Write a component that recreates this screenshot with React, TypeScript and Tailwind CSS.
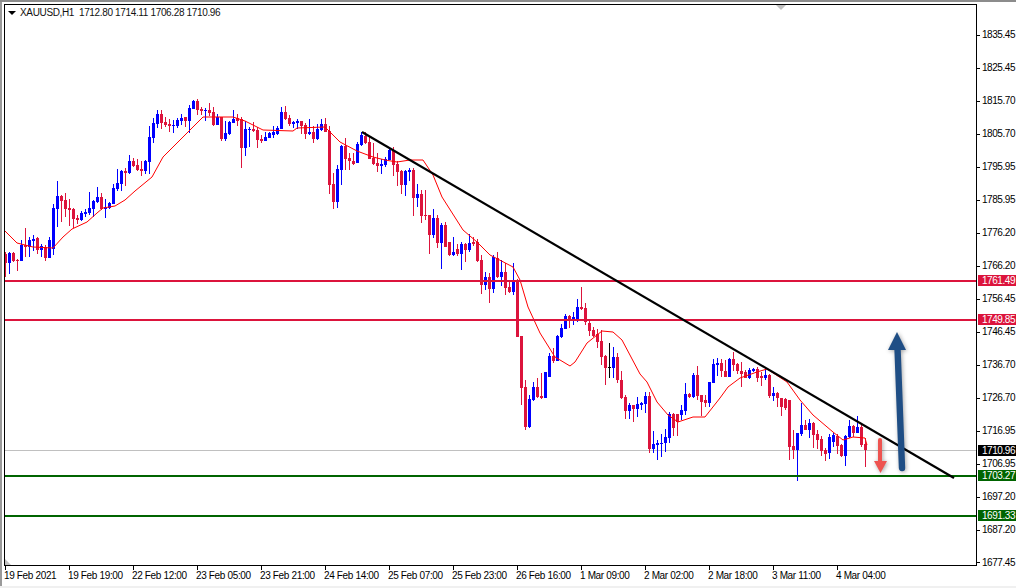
const UP = "#0000FF";
const DOWN = "#DC143C";

type Bar = [string, number, number, number, number]; // colour, high, low, body top, body bottom

// y values read off the chart at 3x, one list per crop (offset brings them to the same scale)
const BARS_A: Bar[] = [
  ["r",755,830,762,790],["b",755,822,760,790],["r",757,785,758,783],["r",778,812,780,783],["b",720,783,735,783],["r",685,770,735,741],
  ["b",712,770,720,741],["b",705,752,716,723],["r",712,762,714,750],["b",732,770,738,750],["r",735,782,740,773],["b",712,773,720,773],
  ["b",612,765,624,748],["b",544,680,588,627],["r",585,665,588,603],["r",580,650,600,627],["r",598,678,624,630],["r",625,685,628,657],
  ["r",645,672,654,660],["b",632,662,640,660],["b",628,650,636,642],["b",576,645,624,640],["b",600,650,603,627],["b",562,610,591,606],
  ["r",580,630,591,627],["b",598,654,621,627],["b",605,628,609,624],["b",552,612,564,612],["b",508,572,549,567],["b",510,572,513,552],
  ["r",505,558,513,519],["b",465,522,483,519],["r",475,500,483,498],["r",478,512,495,510],["r",483,527,507,513],["b",480,522,483,513],
  ["b",378,522,411,486],["b",355,428,369,414],["b",330,385,342,372],["r",330,388,342,369],["r",352,380,366,375],["r",358,396,372,378],
  ["b",360,398,375,378],["b",355,385,361,378],["b",342,375,354,363],["r",350,380,352,364],["b",315,398,324,363],["b",300,328,303,327],
  ["r",297,345,303,330],["r",322,345,327,333],["b",325,362,330,333],["r",308,348,330,340],["r",322,378,336,375],["b",342,375,352,375],
  ["r",350,422,352,417],["b",362,422,399,417],["b",362,404,366,402],["b",330,370,357,369],["r",342,378,354,363],["r",352,504,357,444],
  ["b",362,468,387,444],["b",380,440,386,390],["r",365,396,387,393],["r",380,444,390,420],["r",405,430,417,423],["b",396,424,411,423],
  ["b",396,414,399,414],["b",378,414,396,405],["b",378,404,384,402],["b",321,388,336,387],["r",318,360,336,357],["r",345,378,354,372],
  ["b",362,385,366,372],["b",358,386,363,369],["r",362,402,363,378],["r",370,418,375,402],["b",356,405,396,402],["r",378,428,396,417],
  ["b",372,420,387,417],["b",356,393,372,390],["r",355,396,372,396],["r",378,582,393,555],["r",520,627,552,606],["b",495,624,507,606],
];
const BARS_B: Bar[] = [
  ["b",75,195,78,150],["r",55,150,78,117],["r",100,150,114,123],["r",100,135,123,132],["b",65,130,72,129],["b",37,78,45,75],
  ["r",36,72,48,69],["r",50,118,66,117],["r",68,135,114,132],["r",98,156,129,138],["b",118,162,132,138],["b",110,140,117,135],
  ["b",85,120,90,120],["r",82,168,90,135],["r",122,198,132,156],["r",150,222,153,195],["b",150,228,153,195],["b",145,183,150,156],
  ["r",145,288,150,234],["b",192,260,222,234],["r",210,308,222,288],["r",210,300,285,288],["r",285,402,285,345],["b",267,355,294,345],
  ["r",285,385,294,369],["b",310,447,315,369],["r",305,382,315,381],["r",365,408,366,405],["b",350,408,396,405],["r",372,408,387,402],
  ["b",365,450,372,402],["r",368,425,372,390],["b",342,395,369,390],["r",352,378,366,372],["r",358,425,366,423],["r",405,522,420,495],
  ["b",455,510,471,495],["r",460,548,471,507],["b",405,520,411,507],["r",395,475,414,471],["b",420,498,456,471],["r",428,525,456,504],
  ["r",480,520,501,516],["b",430,525,483,516],["r",478,652,483,650],["r",648,855,648,804],["r",780,930,801,921],["b",825,924,837,921],
  ["b",785,842,801,840],["r",775,835,801,831],["r",758,836,828,834],["b",755,834,756,834],["b",700,772,708,771],["r",685,730,708,723],
  ["b",645,723,648,723],["b",612,654,624,651],["b",582,627,588,627],["r",585,625,588,600],["b",575,615,591,603],["b",537,605,561,597],
  ["r",502,570,561,567],["r",550,615,564,606],["r",598,648,609,633],["r",620,650,630,648],["r",628,684,642,666],["r",630,735,663,711],
  ["r",705,795,708,744],["k",670,775,741,744],["b",680,775,711,744],["r",700,790,711,781],["r",752,838,780,834],["r",825,897,831,873],
  ["b",848,897,855,873],["r",855,906,855,867],["b",830,890,852,867],["b",845,870,849,855],["b",815,880,828,852],["r",815,1000,828,987],
  ["b",933,998,972,987],["b",960,1020,969,975],
];
const BARS_C: Bar[] = [
  ["b",312,380,338,342],["b",298,365,322,340],["b",245,340,252,324],["r",250,318,252,294],["r",255,318,252,276],["b",225,270,240,256],
  ["b",160,255,192,243],["r",190,203,192,201],["b",128,205,135,201],["r",108,210,135,198],["r",195,258,195,216],["r",195,232,210,219],
  ["b",155,230,156,219],["b",88,160,102,159],["b",85,138,99,105],["r",88,140,99,123],["r",90,142,123,141],["b",85,142,87,141],
  ["r",65,122,87,105],["r",100,132,102,123],["r",95,172,123,132],["r",120,145,126,144],["b",115,148,120,144],["b",115,125,117,123],
  ["r",112,155,117,144],["r",125,168,138,144],["b",110,150,135,144],["r",132,205,135,198],["b",170,212,189,198],["r",185,232,189,204],
  ["r",205,258,204,231],["r",205,240,207,234],["r",210,390,210,351],["r",300,388,348,360],["b",308,452,309,360],["b",218,318,285,312],
  ["r",270,300,285,300],["b",268,325,279,300],["r",275,355,279,315],["r",300,358,312,330],["r",318,378,327,363],["r",355,392,360,372],
  ["b",312,388,321,369],["b",308,350,315,336],["r",312,372,318,348],["r",342,382,345,378],["b",315,408,318,378],["b",270,325,288,321],
  ["r",285,322,288,309],["b",258,310,290,309],["r",280,350,291,345],["r",325,410,342,360],
];

const bars = [
  ...BARS_A.map((b) => withOffset(b, 0)),
  ...BARS_B.map((b) => withOffset(b, 360)),
  ...BARS_C.map((b) => withOffset(b, 990)),
];

function withOffset([c, h, l, t, b]: Bar, off: number): Bar {
  return [c, Math.round((h + off) / 3), Math.round((l + off) / 3), Math.round((t + off) / 3), Math.round((b + off) / 3)];
}

const MA = [
  "5,231 17,243 33,247 53,248 63,237 72,229 87,222 97,213 103,208 115,206 125,200 135,191 152,177 163,157 187,133 203,117 220,117 233,117 245,121 263,130 293,131 297,128 325,127",
  "333,135 340,142 357,151 373,157 385,160 397,162 410,160 423,160 433,175 442,197 463,230 477,242 490,255 513,267 520,280 528,307 540,333 555,357 570,366 575,362 587,343 602,331 613,332 622,340",
  "640,374 647,382 657,402 668,415 678,422 693,417 705,417 720,398 728,387 740,378 757,372 767,369 787,382 800,400 813,415 833,432 843,440 853,437 865,438 867,445",
].join(" ");

const PRICES = ["1835.45","1825.45","1815.70","1805.70","1795.95","1785.95","1776.20","1766.20","1756.45","1746.45","1736.70","1726.70","1716.95","1706.95","1697.20","1687.20","1677.45"];
const TIMES = ["19 Feb 2021","19 Feb 19:00","22 Feb 12:00","23 Feb 05:00","23 Feb 21:00","24 Feb 14:00","25 Feb 07:00","25 Feb 23:00","26 Feb 16:00","1 Mar 09:00","2 Mar 02:00","2 Mar 18:00","3 Mar 11:00","4 Mar 04:00"];

export default function App() {
  return (
    <div className="flex h-[588px] w-[1016px] flex-col overflow-hidden bg-white font-['Liberation_Sans',sans-serif] text-[10px] leading-none text-black">
      <div className="h-[2px] shrink-0 bg-[#8c8c8c]" />
      <div className="flex flex-1 flex-col border-l-2 border-[#9a9a9a] pl-[2px] pt-[2px]">
        <div className="flex h-[562px] shrink-0">
          <div className="relative h-full w-[973px] shrink-0 border border-black">
            <Plot />
            <div className="absolute left-[3px] top-[6px] h-0 w-0 border-x-[4px] border-t-[4px] border-x-transparent border-t-black" />
            <div className="absolute left-[15px] top-[3px] whitespace-pre tracking-[-0.35px] text-[#111]">XAUUSD,H1  1712.80 1714.11 1706.28 1710.96</div>
          </div>
          <PriceAxis />
        </div>
        <div className="flex">
          {TIMES.map((t) => (
            <div key={t} className="w-[64px] shrink-0">
              <div className="ml-px h-[4px] w-px bg-black" />
              <div className="mt-[1px] whitespace-nowrap tracking-[-0.35px]">{t}</div>
            </div>
          ))}
        </div>
      </div>
      <div className="h-[2px] shrink-0 bg-[#f0f0f0]" />
    </div>
  );
}

function PriceAxis() {
  return (
    <div className="relative flex-1 pt-[15px] tracking-[-0.45px]">
      {PRICES.map((p) => (
        <div key={p} className="flex h-[32.97px] items-center">
          <div className="mr-[2px] h-px w-[3px] bg-black" />
          {p}
        </div>
      ))}
      <Flag top="top-[271px]" bg="bg-[#DC143C]" label="1761.49" />
      <Flag top="top-[310px]" bg="bg-[#DC143C]" label="1749.85" />
      <Flag top="top-[441px]" bg="bg-black" label="1710.96" />
      <Flag top="top-[466px]" bg="bg-[#006400]" label="1703.27" />
      <Flag top="top-[506px]" bg="bg-[#006400]" label="1691.33" />
    </div>
  );
}

function Flag({ top, bg, label }: { top: string; bg: string; label: string }) {
  return (
    <div className={`absolute left-px flex h-[11px] w-[38px] items-center pl-[4px] text-white ${top} ${bg}`}>{label}</div>
  );
}

function Plot() {
  return (
    <svg width={971} height={560} viewBox="5 5 971 560" className="block">
      <polygon points="776,5 786,5 781,10" fill="#c0c0c0" />
      <polygon points="5,559 5,565 11,565" fill="#c0c0c0" />
      <rect x={5} y={450} width={971} height={1} fill="#c0c0c0" />
      <g shapeRendering="crispEdges">
        {bars.map(([c, h, l, t, b], i) => {
          const color = c === "b" ? UP : c === "r" ? DOWN : "#000000";
          return (
            <g key={i} fill={color}>
              <rect x={5 + 4 * i} y={h} width={1} height={l - h} />
              <rect x={4 + 4 * i} y={t} width={3} height={Math.max(1, b - t)} />
            </g>
          );
        })}
      </g>
      <polyline points={MA} fill="none" stroke="#FF0000" strokeWidth={1} />
      <g shapeRendering="crispEdges">
        <rect x={5} y={280} width={971} height={2} fill={DOWN} />
        <rect x={5} y={319} width={971} height={2} fill={DOWN} />
        <rect x={5} y={475} width={971} height={2} fill="#006400" />
        <rect x={5} y={515} width={971} height={2} fill="#006400" />
      </g>
      <line x1={362} y1={132} x2={954} y2={478} stroke="#000000" strokeWidth={2.2} />
      <g className="drop-shadow-[1px_1px_2px_rgba(0,0,0,0.35)]">
        <line x1={880} y1={440} x2={880} y2={464} stroke="#EE5350" strokeWidth={4} strokeLinecap="round" />
        <polygon points="874,461 887,461 880.5,473" fill="#EE5350" />
      </g>
      <g className="drop-shadow-[1px_1px_2px_rgba(0,0,0,0.35)]">
        <line x1={897.5} y1={348} x2={902} y2={468} stroke="#1F4E85" strokeWidth={6.4} strokeLinecap="round" />
        <polygon points="897,332 906,350 888,350" fill="#1F4E85" />
      </g>
    </svg>
  );
}
